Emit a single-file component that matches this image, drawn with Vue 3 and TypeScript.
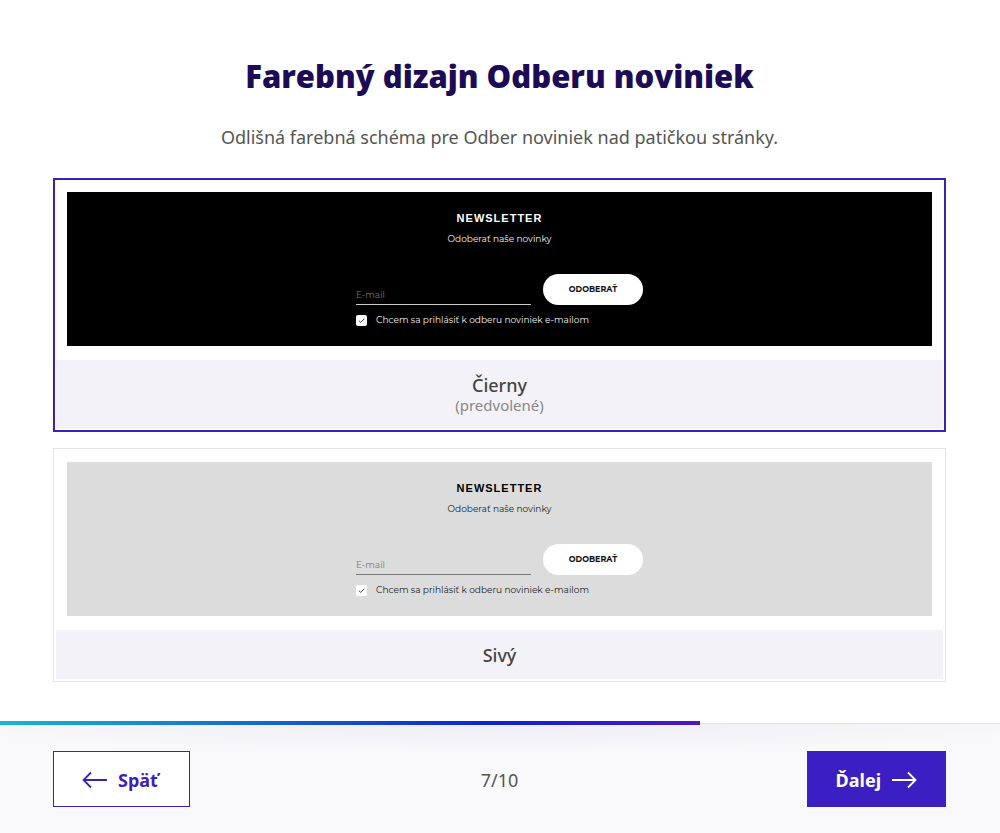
<script setup lang="ts">
import { ref } from 'vue'

interface Scheme {
  id: string
  name: string
  note?: string
}

const schemes: Scheme[] = [
  { id: 'black', name: 'Čierny', note: '(predvolené)' },
  { id: 'grey', name: 'Sivý' },
]
const selected = ref<string>('black')
const consent = ref<Record<string, boolean>>({ black: true, grey: true })
const step = 7
const total = 10
</script>

<template>
  <div class="page">
    <main class="content">
      <h1 class="title">Farebný dizajn Odberu noviniek</h1>
      <p class="lead">Odlišná farebná schéma pre Odber noviniek nad patičkou stránky.</p>

      <div class="options" role="radiogroup" aria-label="Farebný dizajn Odberu noviniek">
        <section
          v-for="s in schemes"
          :key="s.id"
          class="card"
          :class="{ selected: selected === s.id }"
        >
          <form class="preview" :class="s.id" @submit.prevent>
            <h2 class="news-title">NEWSLETTER</h2>
            <p class="news-lead">Odoberať naše novinky</p>
            <div class="fields">
              <input class="email" type="email" placeholder="E-mail" aria-label="E-mail" />
              <button class="subscribe" type="submit">ODOBERAŤ</button>
            </div>
            <label class="consent">
              <span class="tick">
                <input v-model="consent[s.id]" type="checkbox" />
                <svg v-if="consent[s.id]" viewBox="0 0 11 11" aria-hidden="true">
                  <path d="M2.8 5.6 4.7 7.4 8.3 3.7" />
                </svg>
              </span>
              <span>Chcem sa prihlásiť k odberu noviniek e-mailom</span>
            </label>
          </form>
          <label class="caption">
            <input v-model="selected" class="radio" type="radio" name="scheme" :value="s.id" />
            <span class="name">{{ s.name }}</span>
            <span v-if="s.note" class="note">{{ s.note }}</span>
          </label>
        </section>
      </div>
    </main>

    <footer class="footer">
      <div class="progress" :style="{ width: (step / total) * 100 + '%' }"></div>
      <button class="nav back" type="button">
        <svg viewBox="0 0 26 18" aria-hidden="true"><path d="M25 9H1.5M9 1.5 1.5 9 9 16.5" /></svg>
        <span>Späť</span>
      </button>
      <span class="step">{{ step }}/{{ total }}</span>
      <button class="nav next" type="button">
        <span>Ďalej</span>
        <svg viewBox="0 0 26 18" aria-hidden="true"><path d="M1 9h23.5M17 1.5 24.5 9 17 16.5" /></svg>
      </button>
    </footer>
  </div>
</template>

<style>
body {
  margin: 0;
  background: #fff;
}
</style>

<style scoped>
* {
  box-sizing: border-box;
}
.page {
  display: flex;
  flex-direction: column;
  min-height: 100vh;
  font-family: "Noto Sans", "Open Sans", sans-serif;
  color: #444;
}
.content {
  flex: 1;
  padding: 52px 54px 41px 53px;
}
.title {
  margin: 0;
  font-family: "Open Sans", "Noto Sans", sans-serif;
  font-size: 31px;
  line-height: 48px;
  font-weight: 800;
  text-align: center;
  color: #1b0c55;
}
.lead {
  margin: 23px 0 27px;
  font-size: 18px;
  line-height: 28px;
  text-align: center;
  color: #555;
}
.options {
  display: flex;
  flex-direction: column;
  gap: 16px;
}
.card {
  border: 1px solid #e4e4e8;
  padding: 2px;
}
.card.selected {
  border: 2px solid #3d20b8;
  padding: 1px;
}
.preview {
  display: flex;
  flex-direction: column;
  align-items: center;
  margin: 11px 11px 14px;
  padding: 18px 0 20px;
  font-family: Montserrat, Inter, sans-serif;
  font-size: 9px;
  line-height: 12px;
}
.preview.black {
  background: #000;
  color: #f2f2f2;
}
.preview.grey {
  background: #dcdcdc;
  color: #222;
}
.news-title {
  margin: 0;
  font-family: "Liberation Sans", Arial, sans-serif;
  font-size: 11px;
  line-height: 16px;
  font-weight: 700;
  letter-spacing: 1px;
}
.black .news-title {
  color: #fff;
}
.grey .news-title {
  color: #000;
}
.news-lead {
  margin: 7px 0 29px;
}
.fields {
  display: flex;
  gap: 12px;
  width: 287px;
}
.email {
  flex: 1;
  min-width: 0;
  padding: 12px 0 0;
  border: 0;
  border-bottom: 1px solid #ccc;
  border-radius: 0;
  background: transparent;
  color: inherit;
  font: inherit;
  outline: none;
}
.grey .email {
  border-color: #777;
}
.email::placeholder {
  color: #777;
  opacity: 1;
}
.subscribe {
  width: 100px;
  height: 31px;
  padding: 0 0 1px;
  border: 0;
  border-radius: 16px;
  background: #fff;
  color: #111;
  font: inherit;
  font-size: 8px;
  font-weight: 700;
}
.consent {
  display: flex;
  align-items: center;
  gap: 9px;
  width: 287px;
  margin-top: 9px;
  white-space: nowrap;
}
.tick {
  display: grid;
  width: 11px;
  height: 11px;
}
.tick input,
.tick svg {
  grid-area: 1 / 1;
  width: 11px;
  height: 11px;
  margin: 0;
}
.tick input {
  appearance: none;
  border-radius: 2px;
  background: #fff;
}
.tick svg {
  z-index: 1;
  pointer-events: none;
  fill: none;
  stroke: #444;
  stroke-width: 1;
}
.caption {
  display: flex;
  flex-direction: column;
  align-items: center;
  padding: 14px 0 13px;
  background: #f3f2f8;
  text-align: center;
  cursor: pointer;
}
.radio {
  position: absolute;
  opacity: 0;
  pointer-events: none;
}
.name {
  font-size: 18px;
  line-height: 22px;
  font-weight: 500;
}
.note {
  margin-bottom: 2px;
  font-size: 15px;
  line-height: 18px;
  color: #888;
}
.footer {
  position: relative;
  display: grid;
  grid-template-columns: 1fr auto 1fr;
  align-items: center;
  padding: 27px 54px 26px 53px;
  border-top: 1px solid #e1e0ea;
  background: radial-gradient(ellipse 60% 28px at 50% 0, #eeedf3, #f9f9fb);
}
.progress {
  position: absolute;
  left: 0;
  top: -3px;
  height: 4px;
  background: linear-gradient(90deg, #18b6d2, #1020cc 71%, #4e18c8);
}
.nav {
  display: flex;
  align-items: center;
  height: 56px;
  padding: 2px 28px 0;
  border: 1px solid #3d20b8;
  border-radius: 0;
  font: inherit;
  font-size: 18px;
  font-weight: 700;
  gap: 10px;
  cursor: pointer;
}
.nav svg {
  width: 26px;
  height: 18px;
  fill: none;
  stroke: currentColor;
  stroke-width: 1.8;
}
.back {
  justify-self: start;
  min-width: 137px;
  background: #fff;
  color: #3d20b8;
}
.next {
  justify-self: end;
  background: #3b1fc2;
  color: #fff;
}
.step {
  padding-top: 2px;
  font-size: 18px;
  line-height: 28px;
  color: #555;
}
</style>
